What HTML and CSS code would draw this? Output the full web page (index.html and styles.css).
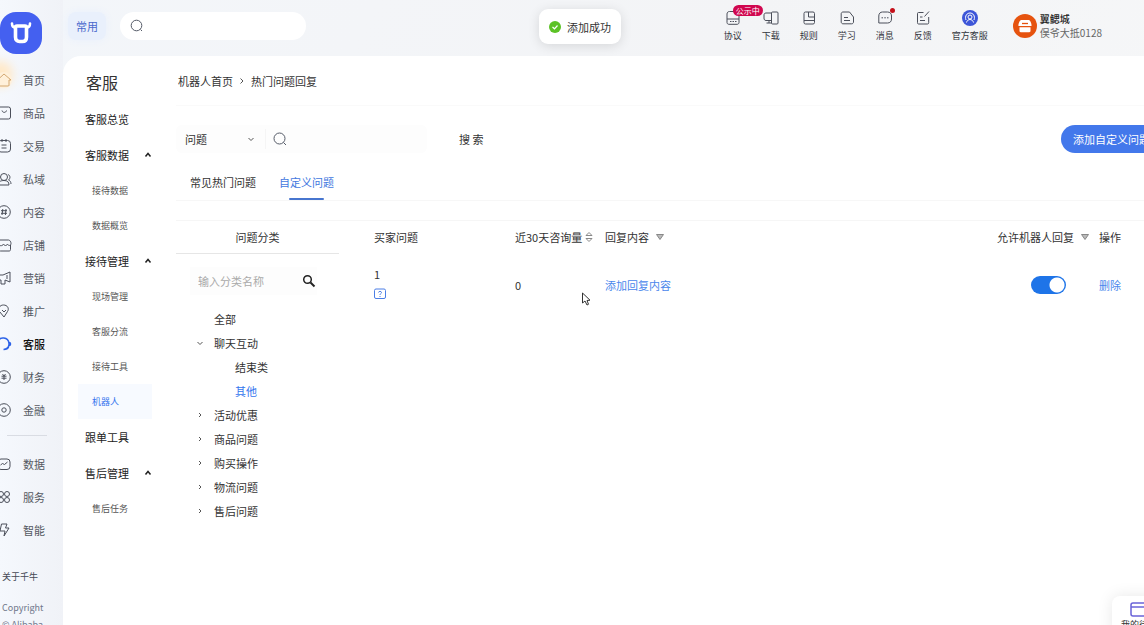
FILE: index.html
```
<!DOCTYPE html>
<html lang="zh-CN">
<head>
<meta charset="utf-8">
<meta name="viewport" content="width=device-width, initial-scale=1">
<title>客服 - 热门问题回复</title>
<link rel="stylesheet" href="styles.css">
</head>
<body>
<div class="app">
  <aside class="rail">
    <a class="logo" href="#" aria-label="千牛"><svg viewBox="0 0 42 42" width="42" height="42"><rect width="42" height="42" rx="16" fill="#4460f0"/><path d="M12 11.500c0 3 1 4 3.500 4h11c2.500 0 3.500-1 3.500-4" fill="none" stroke="#fff" stroke-width="2.600" stroke-linecap="round"/><path d="M17 14h8c1 0 1.500.5 1.500 1.500v9.500c0 3-1.500 4.500-4 4.500h-3c-2.500 0-4-1.500-4-4.500v-9.500c0-1 .5-1.500 1.500-1.500z" fill="#4460f0" stroke="#fff" stroke-width="3.600"/></svg></a>
    <nav class="rail-nav">
      <a class="rail-link home" href="#"><svg class="ico" viewBox="0 0 16 16"><path d="M2 7.500 8 2l7 6h-2v6H2"/></svg>首页</a>
      <a class="rail-link" href="#"><svg class="ico" viewBox="0 0 16 16"><rect x="2" y="2" width="12.500" height="12" rx="2"/><path d="M6 5.500c.5 2.500 4 2.500 4.500 0"/></svg>商品</a>
      <a class="rail-link" href="#"><svg class="ico" viewBox="0 0 16 16"><rect x="2" y="2.500" width="12.500" height="11.500" rx="3"/><path d="M6 1v3m4-3v3M5.500 7h5m-5 3h5"/></svg>交易</a>
      <a class="rail-link" href="#"><svg class="ico" viewBox="0 0 16 16"><circle cx="8" cy="6" r="3.500"/><path d="M2 14c0-3 2.500-4.500 6-4.500s5 1.500 5 4.500zM12 3.500c2.500 1 2.500 4 .5 5.500 1.500.5 2.500 2 2.500 4"/></svg>私域</a>
      <a class="rail-link" href="#"><svg class="ico" viewBox="0 0 16 16"><circle cx="8" cy="8" r="6.300"/><path d="M6.800 5 6 11m4-6-.6 6M5 6.700h6m-6 2.600h6"/></svg>内容</a>
      <a class="rail-link" href="#"><svg class="ico" viewBox="0 0 16 16"><path d="M3 8v4.500c0 1 .5 1.500 1.500 1.500H13c1 0 1.500-.5 1.500-1.500V8M3.500 3h9c1.500 0 2.500 2 2.500 3.500 0 2.500-3 2.500-3.500.5-1 2-3 2-4 0-1 2.500-4.500 2-5.500 0"/></svg>店铺</a>
      <a class="rail-link" href="#"><svg class="ico" viewBox="0 0 16 16"><path d="M1 5h6l7-3v10l-5-2v4H5v-4H1M11 5v4"/></svg>营销</a>
      <a class="rail-link" href="#"><svg class="ico" viewBox="0 0 16 16"><path d="M8 14 3.500 8.500C1.500 5 4 2 7.500 2c4 0 6 3.500 4 6.500zM6 7l2 2 2-2"/></svg>推广</a>
      <a class="rail-link active" href="#"><svg class="ico" viewBox="0 0 16 16"><path d="M2 5C4 .5 12 1 13 7v2c-.5 3-3 4.500-5.500 4.500M13 6.500c2 0 2 3 0 3"/></svg>客服</a>
      <a class="rail-link" href="#"><svg class="ico" viewBox="0 0 16 16"><circle cx="8" cy="8" r="6.300"/><path d="m6.500 5 1.500 2 1.500-2M5.500 7.200h5m-5 2h5M8 7v4"/></svg>财务</a>
      <a class="rail-link" href="#"><svg class="ico" viewBox="0 0 16 16"><circle cx="8" cy="8" r="6.300"/><circle cx="8" cy="8" r="2.200"/></svg>金融</a>
      <hr class="rail-line">
      <a class="rail-link" href="#"><svg class="ico" viewBox="0 0 16 16"><rect x="2" y="3" width="12" height="10.500" rx="3"/><path d="m4.500 9 2-1.500 2 1 3-2.500"/></svg>数据</a>
      <a class="rail-link" href="#"><svg class="ico" viewBox="0 0 16 16"><circle cx="5" cy="5" r="2.500"/><circle cx="11" cy="5" r="2.500"/><circle cx="5" cy="11" r="2.500"/><circle cx="11" cy="11" r="2.500"/></svg>服务</a>
      <a class="rail-link" href="#"><svg class="ico" viewBox="0 0 16 16"><path d="M5.500 2H11L9.500 6H13l-5 8 1-5H4z"/></svg>智能</a>
    </nav>
    <footer class="rail-foot"><a href="#">关于千牛</a><p>Copyright<br>© Alibaba</p></footer>
  </aside>

  <header class="topbar">
    <button class="common" type="button">常用</button>
    <label class="global-search"><svg class="lens" viewBox="0 0 16 16"><circle cx="7.500" cy="7.500" r="5.300"/><path d="m11.500 11.500 1.500 1.500"/></svg><input type="search" aria-label="搜索"></label>
    <nav class="tools">
      <a class="tool" href="#"><svg class="ico" viewBox="0 0 16 16"><path d="M4.500 1.500h5C12 1.500 14 3 14 5v7.500c0 1-.8 1.800-1.800 1.800H3.800c-1 0-1.800-.8-1.800-1.800V9h12M2 9V4c0-1.500 1-2.500 2.500-2.500M5 11.500h1.500m1 0H9m1 0h1.500"/></svg>协议<span class="badge">公示中</span></a>
      <a class="tool" href="#"><svg class="ico" viewBox="0 0 16 16"><rect x="8.500" y="2" width="6.500" height="12" rx="1"/><path d="M8.500 3H3C1.500 3 1 4 1 5v3c0 1.500.5 2.500 2 2.500h5.500M3.500 13h5M6 10.500V13"/></svg>下载</a>
      <a class="tool" href="#"><svg class="ico" viewBox="0 0 16 16"><rect x="3" y="2" width="10.500" height="12" rx="1.500"/><path d="M3 10.500h10.500M7.500 2v5h6"/></svg>规则</a>
      <a class="tool" href="#"><svg class="ico" viewBox="0 0 16 16"><path d="M4 2h6.500L14.500 7v5c0 1-.8 1.800-1.800 1.800H4c-1 0-1.800-.8-1.800-1.800V3.800C2.200 2.800 3 2 4 2zM5 7.500h4M5 10.500h6"/></svg>学习</a>
      <a class="tool" href="#"><svg class="ico" viewBox="0 0 16 16"><path d="M5.500 2h5c2.500 0 4 1.500 4 4v3c0 2.500-1.500 4-4 4H1.800V6c0-2.500 1.500-4 3.700-4zM4.500 7.800H6m1.300 0h1.500m1.200 0h1.500"/></svg>消息<span class="dot"></span></a>
      <a class="tool" href="#"><svg class="ico" viewBox="0 0 16 16"><path d="M8.500 2.500h-5c-.8 0-1 .5-1 1.200v9c0 .8.300 1.300 1 1.300h9c.8 0 1.200-.5 1.200-1.300V7M5 7h2.500M5 10.500h5M9.500 6.500l4.500-5"/></svg>反馈</a>
      <a class="tool" href="#"><svg class="ico" viewBox="0 0 16 16"><circle cx="8" cy="8" r="8" fill="#3d56d8" stroke="none"/><g stroke="#fff"><circle cx="8" cy="7" r="2"/><path d="M4 10C2.500 6 5 3 8 3s5.500 3 4 7M4.500 12.500c1-4 6-4 7 0"/></g></svg>官方客服</a>
    </nav>
    <a class="account" href="#"><svg viewBox="0 0 24 24" width="24" height="24"><circle cx="12" cy="12" r="12" fill="#e6530f"/><path d="M8 6h8c1 0 3 4 2.500 6h-13C5 10 7 6 8 6zM6.500 13.200h11V17c0 .7-.5 1.200-1.200 1.200H7.700c-.7 0-1.200-.5-1.200-1.200z" fill="#fff"/><path d="M9 9.500h6" stroke="#e6530f" stroke-width="1.300"/></svg><span class="who"><strong>翼鳃城</strong><span>俣爷大抵0128</span></span></a>
  </header>

  <div class="panel">
    <nav class="submenu">
      <h1>客服</h1>
      <a class="group" href="#">客服总览</a>
      <button class="group" type="button">客服数据<svg class="chev" viewBox="0 0 8 8"><path d="m1.500 5.500 2.500-3 2.500 3"/></svg></button>
      <a class="item" href="#">接待数据</a>
      <a class="item" href="#">数据概览</a>
      <button class="group" type="button">接待管理<svg class="chev" viewBox="0 0 8 8"><path d="m1.500 5.500 2.500-3 2.500 3"/></svg></button>
      <a class="item" href="#">现场管理</a>
      <a class="item" href="#">客服分流</a>
      <a class="item" href="#">接待工具</a>
      <a class="item current" href="#">机器人</a>
      <a class="group" href="#">跟单工具</a>
      <button class="group" type="button">售后管理<svg class="chev" viewBox="0 0 8 8"><path d="m1.500 5.500 2.500-3 2.500 3"/></svg></button>
      <a class="item" href="#">售后任务</a>
    </nav>

    <main class="content">
      <nav class="crumbs"><a href="#">机器人首页</a><svg class="mini" viewBox="0 0 8 8"><path d="m2.500 1.500 2.500 2.500-2.500 2.500"/></svg><span>热门问题回复</span></nav>
      <form class="filters">
        <div class="query">
          <span class="pick"><select aria-label="搜索类型"><option>问题</option></select><svg class="mini" viewBox="0 0 8 8"><path d="m1.500 3 2.500 2.500L6.500 3"/></svg></span>
          <label class="keyword"><svg class="lens" viewBox="0 0 16 16"><circle cx="7.500" cy="7.500" r="5.500"/><path d="m11.500 11.500 2.500 2.500"/></svg><input type="text" aria-label="关键词"></label>
        </div>
        <button class="search" type="button">搜 索</button>
        <button class="add" type="button">添加自定义问题</button>
      </form>
      <div class="tabs" role="tablist">
        <button class="tab" type="button" role="tab" aria-selected="false">常见热门问题</button>
        <button class="tab" type="button" role="tab" aria-selected="true">自定义问题</button>
      </div>
      <div class="board">
        <section class="cats">
          <h2>问题分类</h2>
          <label class="cat-search"><input type="text" placeholder="输入分类名称" aria-label="输入分类名称"><svg viewBox="0 0 14 14" width="14" height="14"><circle cx="5.500" cy="5.500" r="3.800" fill="none" stroke="#222" stroke-width="1.500"/><path d="m8.500 8.500 4 4" stroke="#222" stroke-width="2"/></svg></label>
          <ul class="tree">
            <li><span class="twist"></span>全部</li>
            <li><svg class="mini twist" viewBox="0 0 8 8"><path d="m1.500 3 2.500 2.500L6.500 3"/></svg>聊天互动</li>
            <li class="leaf">结束类</li>
            <li class="leaf chosen">其他</li>
            <li><svg class="mini twist" viewBox="0 0 8 8"><path d="m3 2 2 2-2 2"/></svg>活动优惠</li>
            <li><svg class="mini twist" viewBox="0 0 8 8"><path d="m3 2 2 2-2 2"/></svg>商品问题</li>
            <li><svg class="mini twist" viewBox="0 0 8 8"><path d="m3 2 2 2-2 2"/></svg>购买操作</li>
            <li><svg class="mini twist" viewBox="0 0 8 8"><path d="m3 2 2 2-2 2"/></svg>物流问题</li>
            <li><svg class="mini twist" viewBox="0 0 8 8"><path d="m3 2 2 2-2 2"/></svg>售后问题</li>
          </ul>
        </section>
        <table class="grid">
          <colgroup><col class="c-question"><col class="c-count"><col><col class="c-allow"><col class="c-act"></colgroup>
          <thead><tr>
            <th>买家问题</th>
            <th><span class="head">近30天咨询量<svg class="sort" viewBox="0 0 8 12"><path d="M1 4.500 4 1.500l3 3zM1 7.500l3 3 3-3z" fill="none" stroke="#888"/></svg></span></th>
            <th><span class="head wide">回复内容<svg class="down" viewBox="0 0 8 6"><path d="M.5.500h7L4 5.500z" fill="#bbb" stroke="#888"/></svg></span></th>
            <th><span class="head wide">允许机器人回复<svg class="down" viewBox="0 0 8 6"><path d="M.5.500h7L4 5.500z" fill="#bbb" stroke="#888"/></svg></span></th>
            <th>操作</th>
          </tr></thead>
          <tbody><tr>
            <td><div class="question">1<svg viewBox="0 0 12 12" width="12" height="12" fill="none" stroke="#4c7fe6"><rect x=".5" y="1" width="11" height="9.500" rx="1.500"/><path d="M4.500 4.500C4.500 3 7.500 3 7.500 4.500 7.500 5.500 6 5.500 6 7M6 8v1"/></svg></div></td>
            <td>0</td>
            <td><a class="act" href="#">添加回复内容</a></td>
            <td><input class="switch" type="checkbox" checked aria-label="允许机器人回复"></td>
            <td><a class="act" href="#">删除</a></td>
          </tr></tbody>
        </table>
      </div>
    </main>
  </div>
</div>
<div class="toast" role="status"><svg viewBox="0 0 12 12" width="12" height="12"><circle cx="6" cy="6" r="6" fill="#5cc226"/><path d="m3.500 6 2 1.800 3-3.300" fill="none" stroke="#fff" stroke-width="1.200"/></svg>添加成功</div>
<button class="dock" type="button"><svg viewBox="0 0 18 16" width="18" height="16" fill="none" stroke="#6a63d8" stroke-width="1.500"><rect x="1" y="1" width="16" height="13" rx="2"/><path d="M1 5h16"/></svg><span>我的待办</span></button>
<svg class="pointer" viewBox="0 0 10 14"><path d="M1.500 1v10l2.500-2 2 4 1.500-.7L6 8.500l3-.3z" fill="#fff" stroke="#333"/></svg>
</body>
</html>
```
FILE: styles.css
```
* { box-sizing: border-box; }
body {
  margin: 0;
  height: 100vh;
  overflow: hidden;
  position: relative;
  font: 400 11px/20px "Noto Sans CJK SC", sans-serif;
  color: #333;
  background: #fff;
}
a { color: inherit; text-decoration: none; }
button, input, select {
  font: inherit;
  color: inherit;
  border: 0;
  padding: 0;
  background: none;
  outline: none;
}
h1, h2, p, ul { margin: 0; padding: 0; font-weight: inherit; }
svg { flex: none; }

.app {
  display: grid;
  grid-template: 56px 1fr / 63px minmax(0, 1fr);
  height: 100%;
  background: linear-gradient(120deg, #f3f6fa, #f3f4f6 50%, #f7f8f9);
}

.rail { grid-row: 1 / 3; min-height: 0; overflow: hidden; background: linear-gradient(90deg, #f5f8fd, #f0f2f7); }
.logo { display: block; height: 42px; margin-top: 12px; }
.logo svg { display: block; }
.rail-nav { padding-top: 9px; }
.rail-link { display: flex; align-items: center; gap: 11px; height: 33px; margin-left: -4px; color: #555962; }
.ico { width: 16px; height: 16px; fill: none; stroke: #4b4f5a; stroke-width: 1; }
.rail-link.active { color: #111; font-weight: 500; }
.rail-link.active .ico { stroke: #2d63e8; stroke-width: 1.600; }
.home .ico { border-radius: 8px; background: #fff0da; stroke: #d3a873; box-shadow: -4px -6px 10px 5px #ffe9c9; }
.rail-line { width: 40px; height: 1px; margin: 9px 0 11px 7px; border: 0; background: #d9dce3; }
.rail-foot { margin-top: 21px; padding-left: 2px; font-size: 9px; color: #454954; }
.rail-foot p { margin-top: 12px; line-height: 17px; color: #70778a; }

.topbar { display: flex; align-items: center; padding: 0 42px 4px 5px; }
.common { width: 38px; height: 28px; border-radius: 8px; background: #e9f0fc; color: #4a68cc; box-shadow: 0 0 8px #e9f0fc; }
.global-search { display: flex; align-items: center; gap: 6px; width: 186px; height: 28px; margin-left: 14px; padding: 0 9px; border-radius: 14px; background: #fff; }
.global-search input { min-width: 0; flex: 1; }
.lens { width: 16px; height: 16px; fill: none; stroke: #555b68; }
.tools { display: flex; gap: 20px; margin-left: auto; font-size: 9px; line-height: 14px; }
.tool { position: relative; display: flex; flex-direction: column; align-items: center; gap: 3px; color: #33363d; white-space: nowrap; }
.badge { position: absolute; left: 9px; top: -5px; padding: 0 3px; border-radius: 6px; background: #d0074f; color: #fff; font-size: 8px; line-height: 11px; }
.dot { position: absolute; right: -1px; top: -2px; width: 5px; height: 5px; border-radius: 50%; background: #c5101a; }
.account { display: flex; align-items: center; gap: 3px; margin-left: 25px; }
.who { display: flex; flex-direction: column; font-size: 10px; line-height: 14px; color: #666; white-space: nowrap; }
.who strong { font-weight: 500; color: #222; }

.panel { display: flex; min-width: 0; min-height: 0; overflow: hidden; border-radius: 18px 0 0 0; background: #fff; }
.submenu { flex: none; width: 105px; padding: 10px 16px 0 15px; }
.submenu h1 { padding-left: 8px; font-size: 16px; line-height: 32px; margin-bottom: 3px; }
.group { display: flex; align-items: center; justify-content: space-between; width: 100%; height: 36px; padding-left: 7px; text-align: left; color: #222; }
.chev { width: 8px; height: 8px; fill: none; stroke: #222; stroke-width: 1.500; }
.item { display: flex; align-items: center; height: 35px; padding-left: 14px; font-size: 9px; color: #555; }
.item.current { background: #f7faff; color: #3474ee; }

.content { flex: 1; min-width: 0; padding: 15px 0 0 8px; }
.crumbs { display: flex; align-items: center; gap: 5px; height: 35px; padding: 0 0 15px 2px; border-bottom: 1px solid #fafafa; }
.mini { width: 8px; height: 8px; fill: none; stroke: #555; }
.filters { display: flex; align-items: center; height: 28px; margin-top: 19px; }
.query { display: flex; align-items: center; width: 251px; height: 28px; border-radius: 6px; background: #fdfdfd; }
.pick { display: flex; align-items: center; width: 90px; padding: 0 10px 0 9px; border-right: 1px solid #f5f5f5; }
.pick select { flex: 1; min-width: 0; appearance: none; }
.keyword { display: flex; align-items: center; flex: 1; min-width: 0; padding-left: 6px; }
.keyword input { flex: 1; min-width: 0; }
.search { height: 28px; margin-left: 32px; }
.add { flex: none; height: 28px; margin: 0 -18px 0 auto; padding: 0 12px; border-radius: 14px; background: #4378eb; color: #fff; }
.tabs { display: flex; gap: 23px; height: 48px; padding: 10px 0 0 14px; border-bottom: 1px solid #f7f7f7; }
.tab { position: relative; height: 37px; }
.tab[aria-selected="true"] { color: #4378e0; }
.tab[aria-selected="true"]::after { content: ""; position: absolute; left: 10px; right: 10px; bottom: 0; height: 2px; border-radius: 1px; background: #4775cf; }

.board { display: flex; align-items: flex-start; margin-top: 19px; border-top: 1px solid #f6f6f6; }
.cats { flex: none; width: 163px; }
.cats h2 { height: 33px; border-bottom: 1px solid #e6e6e6; font-size: 11px; line-height: 32px; text-align: center; }
.cat-search { display: flex; align-items: center; height: 28px; margin: 13px 22px 0 14px; padding: 0 1px 0 8px; background: #fdfdfd; }
.cat-search input { flex: 1; min-width: 0; }
.cat-search input::placeholder { color: #aaa; opacity: 1; }
.tree { padding: 12px 0 0 20px; list-style: none; }
.tree li { display: flex; align-items: center; height: 24px; gap: 10px; }
.twist { width: 8px; }
.tree .leaf { padding-left: 39px; }
.tree .chosen { color: #3474ee; }
.grid { flex: 1; min-width: 0; margin-left: 35px; border-collapse: collapse; table-layout: fixed; }
.c-question { width: 141px; }
.c-count { width: 90px; }
.c-allow { width: 102px; }
.c-act { width: 45px; }
.grid th, .grid td { padding: 0; text-align: left; white-space: nowrap; }
.grid th { height: 32px; font-weight: 400; }
.grid td { height: 64px; }
.head { display: flex; align-items: center; gap: 3px; }
.head.wide { gap: 7px; }
.sort { width: 8px; height: 12px; }
.down { width: 8px; height: 6px; }
.question { display: flex; flex-direction: column; gap: 6px; padding-bottom: 4px; line-height: 16px; }
.act { color: #4a87ec; }
.switch { display: block; appearance: none; width: 35px; height: 18px; margin: 0 0 0 34px; border-radius: 9px; background: radial-gradient(circle at 26px 9px, #fff 7px, #1e74e8 8px); }

.toast { position: absolute; left: 50%; top: 9px; display: flex; align-items: center; gap: 6px; height: 35px; margin-left: -33px; padding: 0 10px; border-radius: 9px; background: #fff; box-shadow: 0 2px 12px #0000001f; white-space: nowrap; }
.dock { position: absolute; right: -22px; bottom: -11px; display: flex; flex-direction: column; align-items: center; width: 54px; height: 40px; padding-top: 6px; border-radius: 8px 0 0 0; background: #fff; font-size: 9px; line-height: 14px; white-space: nowrap; box-shadow: 0 0 16px #00000018; }
.pointer { position: absolute; left: 581px; top: 292px; width: 10px; height: 14px; }
```
